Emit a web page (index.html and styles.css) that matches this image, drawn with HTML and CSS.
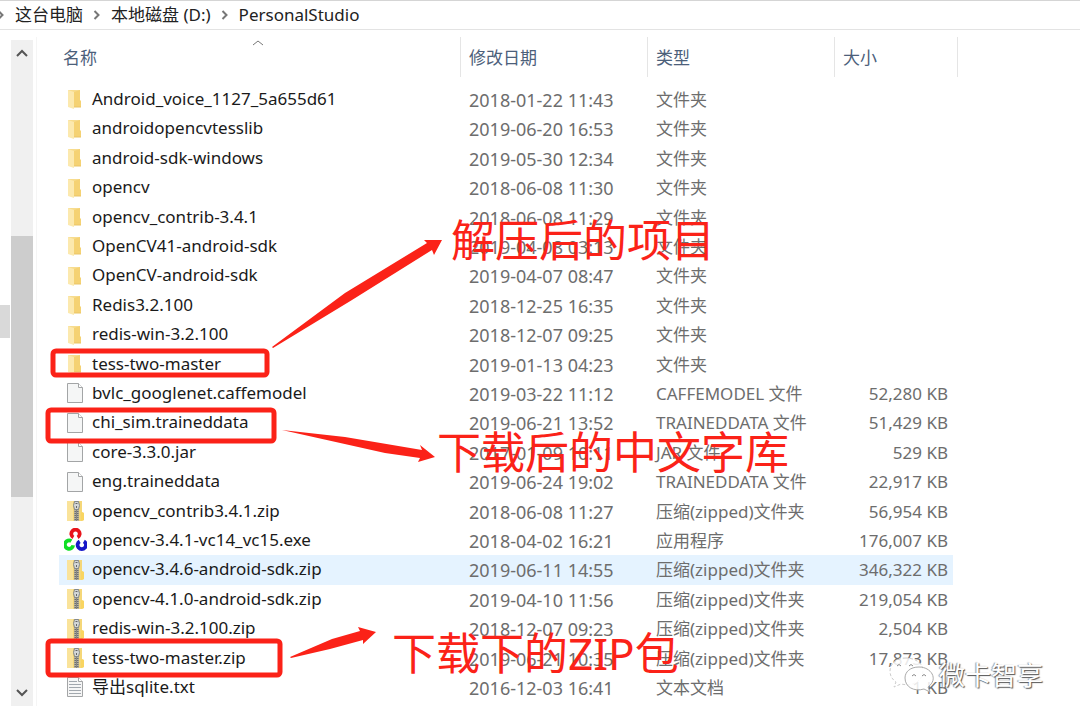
FILE: index.html
```html
<!DOCTYPE html>
<html lang="zh-CN">
<head>
  <meta charset="UTF-8">
  <meta name="viewport" content="width=device-width, initial-scale=1.0">
  <title>PersonalStudio</title>
  <link rel="stylesheet" href="styles.css">
</head>
<body>
  <svg class="icon-defs" aria-hidden="true">
    <symbol id="folder" viewBox="0 0 20 22">
      <path d="M2 2h12v17H2z" fill="#f7dc8e"/>
      <path d="M2 2l6 2v17l-6-2z" fill="#fce9ae"/>
      <path d="M8 4l6-2v10l1 1v6H8z" fill="#f5d273"/>
      <path d="M8 19h7" stroke="#eac566"/>
    </symbol>
    <symbol id="file" viewBox="0 0 20 22">
      <path d="M1.500 1.500h11l4 4v15h-15z" fill="#f5f6f6" stroke="#a3a5a6"/>
      <path d="M12.500 1.500v4h4" fill="#fff" stroke="#a3a5a6"/>
    </symbol>
    <symbol id="text" viewBox="0 0 20 22">
      <path d="M1.500 1.500h11l4 4v15h-15z" fill="#f6f6f6" stroke="#a3a5a6"/>
      <path d="M12.500 1.500v4h4" fill="#fff" stroke="#a3a5a6"/>
      <path d="M3 5.500h8M3 8.500h12M3 11.500h12M3 14.500h12M3 17.500h12" stroke="#a2a8ae"/>
    </symbol>
    <symbol id="zip" viewBox="0 0 20 22">
      <path d="M1 1h15v11l2 1v7l-2 1H1z" fill="#f5d778"/>
      <path d="M1 1h6v20H1z" fill="#fae39a"/>
      <path d="M15 12l3 1v7l-3 1z" fill="#f9d560"/>
      <path d="M8 1h5v20H8z" fill="#b8b29b"/>
      <path d="M10.500 9v12" stroke="#6c6e6f" stroke-width="4" stroke-dasharray="1 1"/>
      <path d="M10.500 10v11" stroke="#858585"/>
      <path d="M8.500 1.500h4l1 4-1 4h-4l-1-4z" fill="#d3d6d6" stroke="#85898b"/>
      <path d="M9.500 3.500h2M10.500 6v2" stroke="#666"/>
    </symbol>
    <symbol id="opencv" viewBox="0 0 22 22">
      <g fill="none" stroke-width="3.600">
        <path d="M9 9A4 4 0 1 1 13 9" stroke="#e8141b"/>
        <path d="M7 12.500A4 4 0 1 0 8.800 16.500" stroke="#10df25"/>
        <path d="M15 12.700A4 4 0 1 0 19 12.700" stroke="#1717c8"/>
      </g>
    </symbol>
    <symbol id="next" viewBox="0 0 8 10">
      <path d="M1.500 1l4 4-4 4" fill="none" stroke="#777" stroke-width="2"/>
    </symbol>
  </svg>

  <nav class="breadcrumb" aria-label="路径">
    <svg class="next"><use href="#next"/></svg>
    <a href="#">这台电脑</a>
    <svg class="next"><use href="#next"/></svg>
    <a href="#">本地磁盘 (D:)</a>
    <svg class="next"><use href="#next"/></svg>
    <a href="#">PersonalStudio</a>
  </nav>

  <main class="explorer">
    <div class="tree-edge"><div class="tree-item"></div></div>
    <div class="scrollbar">
      <button type="button" aria-label="向上"><svg viewBox="0 0 12 8"><path d="M1 7l5-5 5 5"/></svg></button>
      <div class="track-top"></div>
      <div class="thumb"></div>
      <div class="track-bottom"></div>
      <button type="button" aria-label="向下"><svg viewBox="0 0 12 8"><path d="M1 1l5 5 5-5"/></svg></button>
    </div>

    <div class="pane">
      <table class="files">
        <colgroup>
          <col class="col-name">
          <col class="col-date">
          <col class="col-type">
          <col class="col-size">
        </colgroup>
        <thead>
          <tr>
            <th><button type="button">名称</button><svg class="sort" viewBox="0 0 12 6"><path d="M1 5l5-4 5 4"/></svg></th>
            <th><button type="button">修改日期</button></th>
            <th><button type="button">类型</button></th>
            <th><button type="button">大小</button></th>
          </tr>
        </thead>
        <tbody>
          <tr><td><svg class="icon"><use href="#folder"/></svg>Android_voice_1127_5a655d61</td><td>2018-01-22 11:43</td><td>文件夹</td><td></td></tr>
          <tr><td><svg class="icon"><use href="#folder"/></svg>androidopencvtesslib</td><td>2019-06-20 16:53</td><td>文件夹</td><td></td></tr>
          <tr><td><svg class="icon"><use href="#folder"/></svg>android-sdk-windows</td><td>2019-05-30 12:34</td><td>文件夹</td><td></td></tr>
          <tr><td><svg class="icon"><use href="#folder"/></svg>opencv</td><td>2018-06-08 11:30</td><td>文件夹</td><td></td></tr>
          <tr><td><svg class="icon"><use href="#folder"/></svg>opencv_contrib-3.4.1</td><td>2018-06-08 11:29</td><td>文件夹</td><td></td></tr>
          <tr><td><svg class="icon"><use href="#folder"/></svg>OpenCV41-android-sdk</td><td>2019-04-08 03:13</td><td>文件夹</td><td></td></tr>
          <tr><td><svg class="icon"><use href="#folder"/></svg>OpenCV-android-sdk</td><td>2019-04-07 08:47</td><td>文件夹</td><td></td></tr>
          <tr><td><svg class="icon"><use href="#folder"/></svg>Redis3.2.100</td><td>2018-12-25 16:35</td><td>文件夹</td><td></td></tr>
          <tr><td><svg class="icon"><use href="#folder"/></svg>redis-win-3.2.100</td><td>2018-12-07 09:25</td><td>文件夹</td><td></td></tr>
          <tr><td><svg class="icon"><use href="#folder"/></svg>tess-two-master</td><td>2019-01-13 04:23</td><td>文件夹</td><td></td></tr>
          <tr><td><svg class="icon"><use href="#file"/></svg>bvlc_googlenet.caffemodel</td><td>2019-03-22 11:12</td><td>CAFFEMODEL 文件</td><td>52,280 KB</td></tr>
          <tr><td><svg class="icon"><use href="#file"/></svg>chi_sim.traineddata</td><td>2019-06-21 13:52</td><td>TRAINEDDATA 文件</td><td>51,429 KB</td></tr>
          <tr><td><svg class="icon"><use href="#file"/></svg>core-3.3.0.jar</td><td>2017-01-09 10:11</td><td>JAR 文件</td><td>529 KB</td></tr>
          <tr><td><svg class="icon"><use href="#file"/></svg>eng.traineddata</td><td>2019-06-24 19:02</td><td>TRAINEDDATA 文件</td><td>22,917 KB</td></tr>
          <tr><td><svg class="icon"><use href="#zip"/></svg>opencv_contrib3.4.1.zip</td><td>2018-06-08 11:27</td><td>压缩(zipped)文件夹</td><td>56,954 KB</td></tr>
          <tr><td><svg class="icon icon-app"><use href="#opencv"/></svg>opencv-3.4.1-vc14_vc15.exe</td><td>2018-04-02 16:21</td><td>应用程序</td><td>176,007 KB</td></tr>
          <tr class="hovered"><td><svg class="icon"><use href="#zip"/></svg>opencv-3.4.6-android-sdk.zip</td><td>2019-06-11 14:55</td><td>压缩(zipped)文件夹</td><td>346,322 KB</td></tr>
          <tr><td><svg class="icon"><use href="#zip"/></svg>opencv-4.1.0-android-sdk.zip</td><td>2019-04-10 11:56</td><td>压缩(zipped)文件夹</td><td>219,054 KB</td></tr>
          <tr><td><svg class="icon"><use href="#zip"/></svg>redis-win-3.2.100.zip</td><td>2018-12-07 09:23</td><td>压缩(zipped)文件夹</td><td>2,504 KB</td></tr>
          <tr><td><svg class="icon"><use href="#zip"/></svg>tess-two-master.zip</td><td>2019-06-21 10:35</td><td>压缩(zipped)文件夹</td><td>17,873 KB</td></tr>
          <tr><td><svg class="icon"><use href="#text"/></svg>导出sqlite.txt</td><td>2016-12-03 16:41</td><td>文本文档</td><td>1 KB</td></tr>
        </tbody>
      </table>
    </div>
  </main>

  <!-- red marks drawn over the list -->
  <svg class="marks" width="1080" height="724" aria-hidden="true">
    <g fill="none" stroke="#fb2218" stroke-width="5">
      <rect x="53" y="351" width="214" height="24" rx="3"/>
      <rect x="48" y="410" width="226" height="31" rx="3"/>
      <rect x="48" y="641" width="232" height="34" rx="3"/>
    </g>
    <g fill="#fb2218">
      <path d="M272 347L345 293 427 243 424 240 442 240 434 255 432 250 352 300 273 348z"/>
      <path d="M282 430L345 437 422 450 420 445 435 457 418 462 420 458 385 453z"/>
      <path d="M290 657L332 639 360 631 358 627 376 632 363 644 363 640 330 649 291 658z"/>
    </g>
  </svg>
  <span class="note note-project">解压后的项目</span>
  <span class="note note-data">下载后的中文字库</span>
  <span class="note note-zip">下载下的ZIP包</span>

  <div class="watermark">
    <svg viewBox="0 0 46 38" aria-hidden="true">
      <g fill="#fff" fill-opacity="0.850" stroke="#aaa" stroke-width="1">
        <path d="M18 2C8 2 2 8 2 15c0 5 2 8 6 11l-2 5 7-3c13 3 22-4 22-13 0-8-8-13-17-13z" stroke="#ccc" stroke-dasharray="3 2"/>
        <path d="M31 11c-9 0-14 5-14 11 0 9 9 14 19 11l6 3-2-5c11-8 3-20-9-20z"/>
      </g>
      <g fill="none" stroke="#888">
        <path d="M9 10q2-3 4 0M21 10q2-3 4 0M24 20q2-3 4 0M34 20q2-3 4 0"/>
      </g>
    </svg>
    <span>微卡智享</span>
  </div>
</body>
</html>
```

FILE: styles.css
```css
* {
  box-sizing: border-box;
}
body {
  margin: 0;
  min-height: 100vh;
  display: flex;
  flex-direction: column;
  position: relative;
  overflow: hidden;
  background: #fff;
  color: #1a1a1a;
  font-family: "Noto Sans", "Noto Sans CJK SC", sans-serif;
  font-size: 17px;
  line-height: 24px;
}
button {
  border: none;
  padding: 0;
  background: none;
  color: inherit;
  font: inherit;
  cursor: pointer;
}
.icon-defs {
  display: none;
}

/* path bar */
.breadcrumb {
  display: flex;
  align-items: center;
  gap: 10px;
  height: 30px;
  border-top: 1px solid #d5d5d5;
  border-bottom: 1px solid #e3e3e3;
}
.breadcrumb a {
  color: #222;
  text-decoration: none;
}
.next {
  width: 8px;
  height: 10px;
}
.next:first-child {
  margin-left: -3px;
}

/* list area */
.explorer {
  flex: 1;
  display: flex;
  padding-bottom: 18px;
}
.tree-edge {
  width: 10px;
  margin-right: 1px;
  display: flex;
  flex-direction: column;
  justify-content: center;
}
.tree-item {
  height: 33px;
  margin-bottom: 94px;
  background: #d9d9d9;
}
.scrollbar {
  display: flex;
  flex-direction: column;
  width: 22px;
  margin-top: 10px;
  background: #f0f0f0;
}
.scrollbar button {
  height: 26px;
  line-height: 0;
}
.scrollbar svg {
  width: 12px;
  height: 8px;
  fill: none;
  stroke: #555;
  stroke-width: 2;
}
.track-top {
  flex: 170;
}
.thumb {
  flex: 261;
  background: #cdcdcd;
}
.track-bottom {
  flex: 183;
}
.pane {
  flex: 1;
  margin: 7px 0 0 3px;
  padding-left: 22px;
  border-left: 1px solid #f5f5f5;
}

.files {
  width: 899px;
  table-layout: fixed;
  border-collapse: separate;
  border-spacing: 0;
}
.col-name {
  width: 402px;
}
.col-date,
.col-type {
  width: 187px;
}
.files th {
  position: relative;
  height: 40px;
  padding: 2px 0 0 8px;
  border-right: 1px solid #e5e5e5;
  color: #4c607a;
  font-weight: normal;
  text-align: left;
}
.files th:first-child {
  padding-left: 4px;
}
.files thead::after {
  content: "";
  display: block;
  height: 8px;
}
.sort {
  position: absolute;
  top: 3px;
  left: 193px;
  width: 12px;
  height: 6px;
  fill: none;
  stroke: #777;
}
.files tbody tr {
  height: 29px;
}
.files tbody tr:nth-child(5n+2),
.files tbody tr:nth-child(5n+4) {
  height: 30px;
}
.files td {
  padding: 0 0 0 8px;
  color: #6d6d6d;
  white-space: nowrap;
}
.files td:first-child {
  padding-left: 7px;
  color: #1a1a1a;
}
.files td:nth-child(2) {
  font-size: 18px;
}
.files td:last-child {
  padding: 0 5px 0 0;
  border-right: 5px solid transparent;
  background-clip: padding-box;
  text-align: right;
}
.hovered td {
  background-color: #e5f3ff;
}
.icon {
  width: 20px;
  height: 22px;
  margin: 0 6px 2px 0;
  vertical-align: middle;
}
.icon-app {
  width: 23px;
  height: 23px;
  margin-left: -2px;
  margin-right: 5px;
}

/* marks and notes on top of the list */
.marks {
  position: absolute;
  top: 0;
  left: 0;
  pointer-events: none;
}
.note {
  position: absolute;
  color: #fb2218;
  font-size: 44px;
  line-height: 60px;
  white-space: nowrap;
}
.note-project {
  top: 210px;
  left: 451px;
}
.note-data {
  top: 422px;
  left: 437px;
}
.note-zip {
  top: 623px;
  left: 392px;
}

.watermark {
  position: absolute;
  top: 656px;
  left: 888px;
  display: flex;
  align-items: center;
  gap: 5px;
  color: #fff;
  font-size: 26px;
  line-height: 38px;
  text-shadow: 1px 1px 1px #555, -1px 0 1px #999;
}
.watermark svg {
  width: 46px;
  height: 38px;
}
```
